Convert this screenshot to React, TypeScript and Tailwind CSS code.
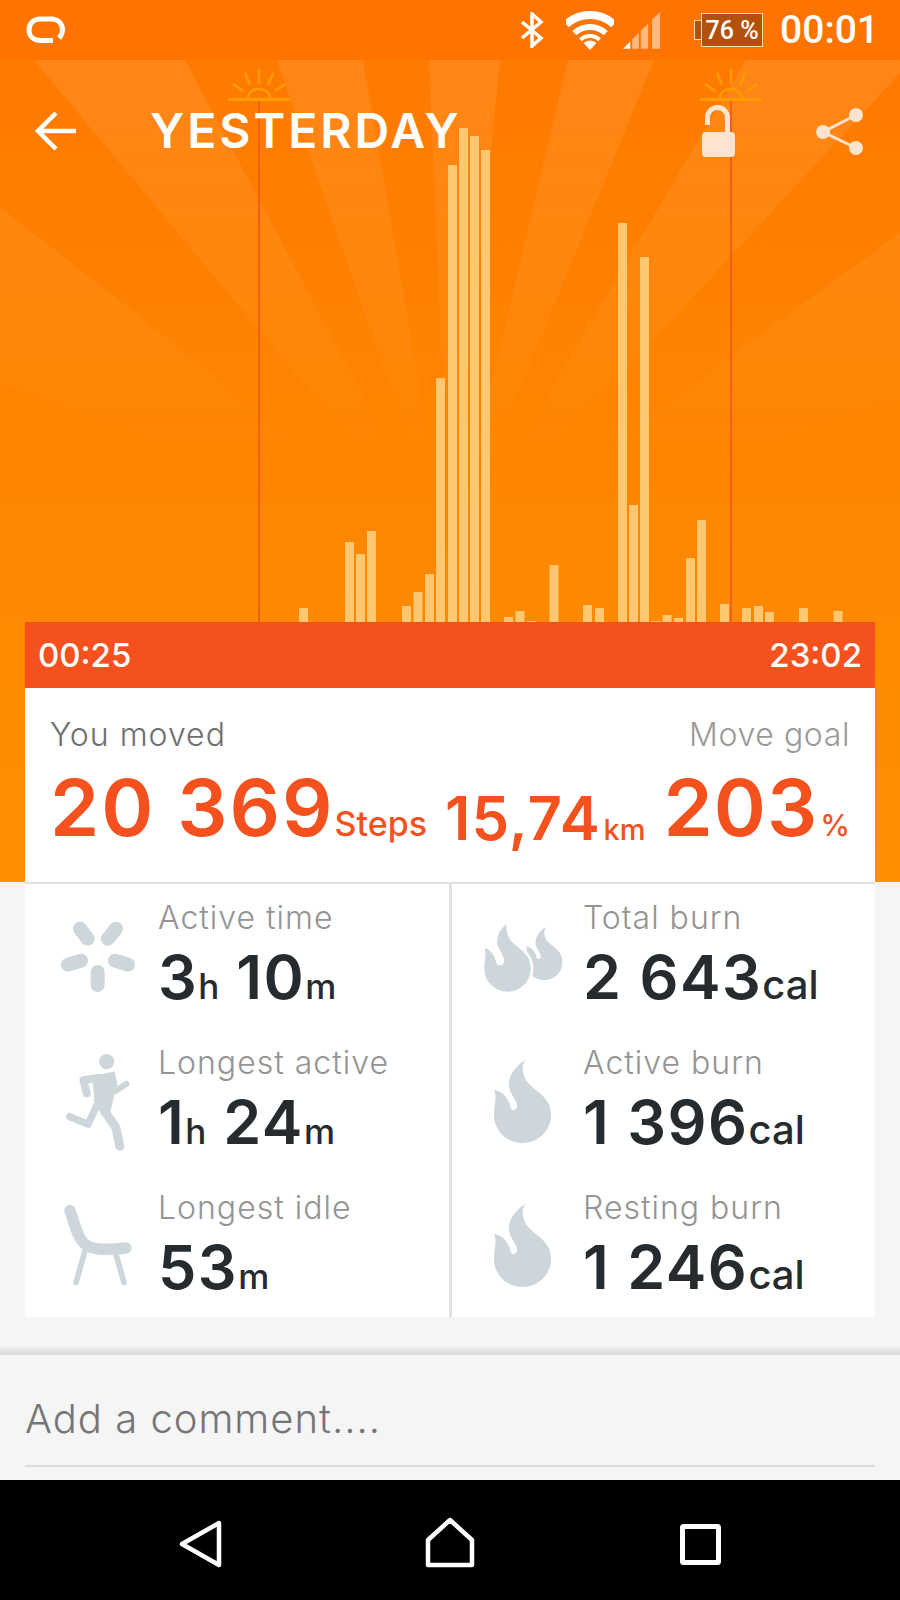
import type { ReactNode } from "react";

const bars = [
  [299, 14], [345, 80], [356, 68], [367, 91], [402, 16], [413.5, 30], [425, 48], [436, 244],
  [448, 457], [459, 494], [470, 486], [481, 472], [504, 5], [515.5, 11], [527, 1], [549.5, 57],
  [583, 17], [595, 14], [618, 399], [629, 117], [640, 365], [651.5, 1], [662.5, 7], [674, 4],
  [686, 64], [697, 102], [720, 18], [742, 14], [754, 16], [765, 10], [799, 14], [833.5, 11],
];

const rays = [
  "450,560 34,60 185,60",
  "450,560 277,60 363,60",
  "450,560 429,60 500,60",
  "450,560 568,60 654,60",
  "450,560 746,60 900,60 900,73",
  "450,560 0,207 0,383",
  "450,560 900,233 900,400",
];

const FLAME =
  "M31 0C22 6 14 15 15 26C16 34 22 39 23 45C23.5 50.5 17.5 52 16.5 47C15.5 40 9 31 0 30C3.5 37 0 45 0 55C0 71 13 83 28.5 83C44 83 57 71 57 55C57 38 44 33 35 24C28 16 27 7 31 0Z";

function Sun({ x }: { x: number }) {
  return (
    <g stroke="#ff9d00" strokeWidth="2.5" fill="none">
      <path d={`M${x - 31} 99.5H${x + 31}`} strokeWidth="3" />
      <path d={`M${x - 11} 98a11 9 0 0 1 22 0`} />
      <path d={`M${x} 69V84M${x - 14} 73l5 12M${x + 14} 73l-5 12M${x - 26} 84l10 7M${x + 26} 84l-10 7`} />
    </g>
  );
}

function Chart() {
  return (
    <svg className="absolute inset-0" width="900" height="822" viewBox="0 60 900 822">
      <defs>
        <linearGradient id="ray" gradientUnits="userSpaceOnUse" x1="0" y1="60" x2="0" y2="470">
          <stop offset="0" stopColor="#fff" stopOpacity="0.09" />
          <stop offset="0.55" stopColor="#fff" stopOpacity="0.05" />
          <stop offset="1" stopColor="#fff" stopOpacity="0" />
        </linearGradient>
      </defs>
      {rays.map((p) => (
        <polygon key={p} points={p} fill="url(#ray)" />
      ))}
      <rect x="258" y="100" width="2" height="522" fill="#f45f16" />
      <rect x="730" y="100" width="2" height="522" fill="#f45f16" />
      <Sun x={259} />
      <Sun x={731} />
      {bars.map(([x, h]) => (
        <rect key={x} x={x} y={622 - h} width="9" height={h} fill="#ffc870" />
      ))}
    </svg>
  );
}

function StatusBar() {
  return (
    <div className="h-[60px] shrink-0 bg-[#ff7300] flex items-center pl-[26px] pr-[21px] text-white">
      <svg width="40" height="28" viewBox="0 0 40 28" fill="none" stroke="#fff" strokeWidth="5">
        <path d="M27 24.500H15C7 24.500 3 20 3 14C3 7.500 7.500 3 14 3H25C32 3 36.500 7.500 36.500 13.500C36.500 17 35.500 19.500 33 22" />
      </svg>
      <div className="flex-1" />
      <svg width="24" height="36" viewBox="0 0 24 36" fill="none" stroke="#fff" strokeWidth="3.500" className="mr-[22px]">
        <path d="M2 10L21 26L12 34V2L21 10L2 26" />
      </svg>
      <svg width="48" height="40" viewBox="0 0 48 40" fill="none" stroke="#fff" className="mr-[9px]">
        <path d="M0.100 14.400A35 35 0 0 1 47.900 14.400" strokeWidth="8" />
        <path d="M8.300 23.100A23 23 0 0 1 39.700 23.100" strokeWidth="6" />
        <path d="M14.400 29.700A14 14 0 0 1 33.600 29.700" strokeWidth="4" />
        <path d="M24 40L17.500 33A9.500 9.500 0 0 1 30.500 33Z" fill="#fff" stroke="none" />
      </svg>
      <svg width="37" height="37" viewBox="368 40 112 110" fill="#fff" className="mr-[34px]">
        <polygon points="368,150 390,128 390,150" />
        <polygon points="396,122 416,102 416,150 396,150" opacity="0.5" />
        <polygon points="422,96 444,74 444,150 422,150" opacity="0.5" />
        <polygon points="456,62 480,40 480,150 456,150" opacity="0.5" />
      </svg>
      <div className="flex items-center mr-[17px]">
        <div className="w-[7px] h-[20px] bg-[#b3500a] border border-r-0 border-[#ffd9b0]" />
        <div className="w-[62px] h-[34px] bg-[#b3500a] border border-[#ffd9b0] flex items-center justify-center font-['Roboto',sans-serif] font-medium text-[25px] leading-none">
          76 %
        </div>
      </div>
      <span className="font-['Roboto',sans-serif] font-medium text-[39px] leading-none">00:01</span>
    </div>
  );
}

function Toolbar() {
  return (
    <div className="relative mt-[45px] h-[52px] flex items-center">
      <svg width="42" height="40" viewBox="0 0 42 40" fill="none" stroke="#fff" strokeWidth="4.500" className="ml-[35px]">
        <path d="M41 20H5M21 2L3 20L21 38" />
      </svg>
      <span className="ml-[73px] font-['Inter',sans-serif] font-semibold text-[48px] leading-none text-white tracking-[3px]">
        YESTERDAY
      </span>
      <div className="flex-1" />
      <svg width="34" height="52" viewBox="0 0 34 52" fill="#fde4cf" className="mr-[79px]">
        <rect x="0" y="27" width="33" height="25" rx="4" />
        <path d="M5.500 20V12.500A10 10 0 0 1 25.500 12.500V28" fill="none" stroke="#fde4cf" strokeWidth="5" />
      </svg>
      <svg width="48" height="48" viewBox="0 0 48 48" fill="#fde4cf" className="mr-[37px]">
        <circle cx="41" cy="8" r="7" />
        <circle cx="8" cy="25" r="7" />
        <circle cx="41" cy="41" r="7" />
        <path d="M41 8L8 25L41 41" fill="none" stroke="#fde4cf" strokeWidth="3" />
      </svg>
    </div>
  );
}

function SummaryCard() {
  return (
    <div className="mx-[25px] shrink-0 relative">
      <div className="h-[66px] bg-[#f4511e] flex items-center justify-between px-[13px] text-white font-['Inter',sans-serif] font-medium text-[33px] leading-none">
        <span>00:25</span>
        <span>23:02</span>
      </div>
      <div className="h-[194px] bg-white px-[25px] font-['Inter',sans-serif]">
        <div className="flex justify-between pt-[29px] text-[32px] leading-[36px] font-light">
          <span className="text-[#6f6f6f] tracking-[1px]">You moved</span>
          <span className="text-[#9a9a9a] tracking-[0.6px]">Move goal</span>
        </div>
        <div className="flex justify-between items-baseline mt-[9px] text-[#f4511e] font-semibold">
          <div>
            <span className="text-[79px] leading-[90px] tracking-[2px]">20 369</span>
            <span className="text-[34px] font-medium">Steps</span>
          </div>
          <div className="translate-y-[4px]">
            <span className="text-[60px] leading-none tracking-[1px]">15,74</span>
            <span className="text-[29px] font-medium ml-[3px]">km</span>
          </div>
          <div>
            <span className="text-[79px] leading-none tracking-[1px]">203</span>
            <span className="text-[30px] font-medium ml-[2px]">%</span>
          </div>
        </div>
      </div>
    </div>
  );
}

function Stat({ icon, pad, label, value, unit }: { icon: ReactNode; pad: string; label: string; value: ReactNode; unit: ReactNode }) {
  return (
    <div className="flex items-center">
      <div className={pad}>{icon}</div>
      <div className="self-start pt-[16px] font-['Inter',sans-serif]">
        <div className="text-[32px] leading-[36px] font-light text-[#949494] tracking-[1px]">{label}</div>
        <div className="mt-[11px] h-[60px] text-[#262b30] font-semibold text-[61px] leading-[60px] tracking-[1.5px] whitespace-nowrap">
          {value}
          {unit}
        </div>
      </div>
    </div>
  );
}

const Small = ({ children }: { children: string }) => <span className="text-[35px] font-medium tracking-normal">{children}</span>;
const Cal = () => <span className="text-[40px] font-medium tracking-normal">cal</span>;

function Flame() {
  return (
    <svg width="58" height="84" viewBox="0 0 58 84" fill="#cdd6da">
      <path d={FLAME} />
    </svg>
  );
}

function DoubleFlame() {
  return (
    <svg width="80" height="74" viewBox="0 0 80 74" fill="#cdd6da">
      <path d={FLAME} transform="translate(43 7) scale(0.64)" />
      <path d={FLAME} transform="scale(0.86 0.88)" stroke="#fff" strokeWidth="3" />
    </svg>
  );
}

function ActiveIcon() {
  return (
    <svg width="74" height="72" viewBox="123 118 222 214" fill="none" stroke="#cdd6da" strokeWidth="42" strokeLinecap="round">
      <path d="M180 140L203 170M288 140L264 170M144 248L183 236M324 248L285 236M233 270V309" />
    </svg>
  );
}

function RunnerIcon() {
  return (
    <svg width="66" height="98" viewBox="133 510 198 296" fill="none" stroke="#cdd6da" strokeLinecap="round" strokeLinejoin="round">
      <circle cx="258" cy="536" r="23" fill="#cdd6da" stroke="none" />
      <path d="M214 580L282 566L290 600L270 685L222 680L220 640Z" fill="#cdd6da" stroke="none" />
      <path d="M232 585L188 592L198 632" strokeWidth="24" />
      <path d="M272 580L285 625L318 603" strokeWidth="18" />
      <path d="M232 660L202 725L146 702" strokeWidth="22" />
      <path d="M248 680L286 735L298 792" strokeWidth="27" />
    </svg>
  );
}

function ChairIcon() {
  return (
    <svg width="68" height="82" viewBox="130 975 204 246" fill="none" stroke="#cdd6da" strokeLinecap="round" strokeLinejoin="round">
      <path d="M148 992C165 1040 172 1085 205 1100C235 1113 280 1108 316 1104" strokeWidth="34" />
      <path d="M192 1115L166 1208M284 1115L310 1208" strokeWidth="17" />
    </svg>
  );
}

function StatsGrid() {
  const rowsClass = "bg-white grid grid-rows-[145px_145px_143px]";
  return (
    <div className="mx-[25px] border-t-2 border-[#e0e0e0] grid grid-cols-[424px_3px_423px] h-[435px]">
      <div className={rowsClass}>
        <Stat icon={<ActiveIcon />} pad="w-[133px] shrink-0 flex pl-[36px]" label="Active time" value={<>3<Small>h</Small> 10</>} unit={<Small>m</Small>} />
        <Stat icon={<RunnerIcon />} pad="w-[133px] shrink-0 flex pl-[40px]" label="Longest active" value={<>1<Small>h</Small> 24</>} unit={<Small>m</Small>} />
        <Stat icon={<ChairIcon />} pad="w-[133px] shrink-0 flex pl-[39px]" label="Longest idle" value="53" unit={<Small>m</Small>} />
      </div>
      <div className="bg-[#e0e0e0]" />
      <div className={rowsClass}>
        <Stat icon={<DoubleFlame />} pad="w-[131px] shrink-0 flex pl-[31px]" label="Total burn" value="2 643" unit={<Cal />} />
        <Stat icon={<Flame />} pad="w-[131px] shrink-0 flex pl-[42px]" label="Active burn" value="1 396" unit={<Cal />} />
        <Stat icon={<Flame />} pad="w-[131px] shrink-0 flex pl-[42px]" label="Resting burn" value="1 246" unit={<Cal />} />
      </div>
    </div>
  );
}

function NavBar() {
  return (
    <div className="h-[120px] shrink-0 bg-black relative">
      <svg className="absolute left-[178px] top-[39px]" width="45" height="50" viewBox="0 0 45 50" fill="none" stroke="#fff" strokeWidth="4.500" strokeLinejoin="round">
        <path d="M41 4V46L4 25Z" />
      </svg>
      <svg className="absolute left-[424px] top-[36px]" width="52" height="53" viewBox="0 0 52 53" fill="none" stroke="#fff" strokeWidth="4.500" strokeLinejoin="round">
        <path d="M26 4L48 24V49H4V24Z" />
      </svg>
      <svg className="absolute left-[680px] top-[44px]" width="41" height="41" viewBox="0 0 41 41" fill="none" stroke="#fff" strokeWidth="5" strokeLinejoin="round">
        <rect x="2.500" y="2.500" width="36" height="36" rx="1" />
      </svg>
    </div>
  );
}

export default function App() {
  return (
    <div className="w-[900px] h-[1600px] flex flex-col overflow-hidden bg-[#f5f5f5]">
      <StatusBar />
      <div className="relative h-[822px] shrink-0 flex flex-col bg-gradient-to-b from-[#ff7a00] to-[#ff9000]">
        <Chart />
        <Toolbar />
        <div className="flex-1" />
        <SummaryCard />
      </div>
      <StatsGrid />
      <div className="flex-1 flex flex-col justify-end">
        <div className="h-[10px] bg-gradient-to-b from-[#f5f5f5] to-[#d4d6d7]" />
      </div>
      <div className="h-[125px] shrink-0 bg-[#f5f5f5] px-[25px] flex flex-col justify-end">
        <div className="pb-[22px] border-b-2 border-[#dcdcdc] mb-[13px] font-['Inter',sans-serif] font-light text-[#757575] text-[40px] leading-[48px] tracking-[1px]">
          Add a comment....
        </div>
      </div>
      <NavBar />
    </div>
  );
}
